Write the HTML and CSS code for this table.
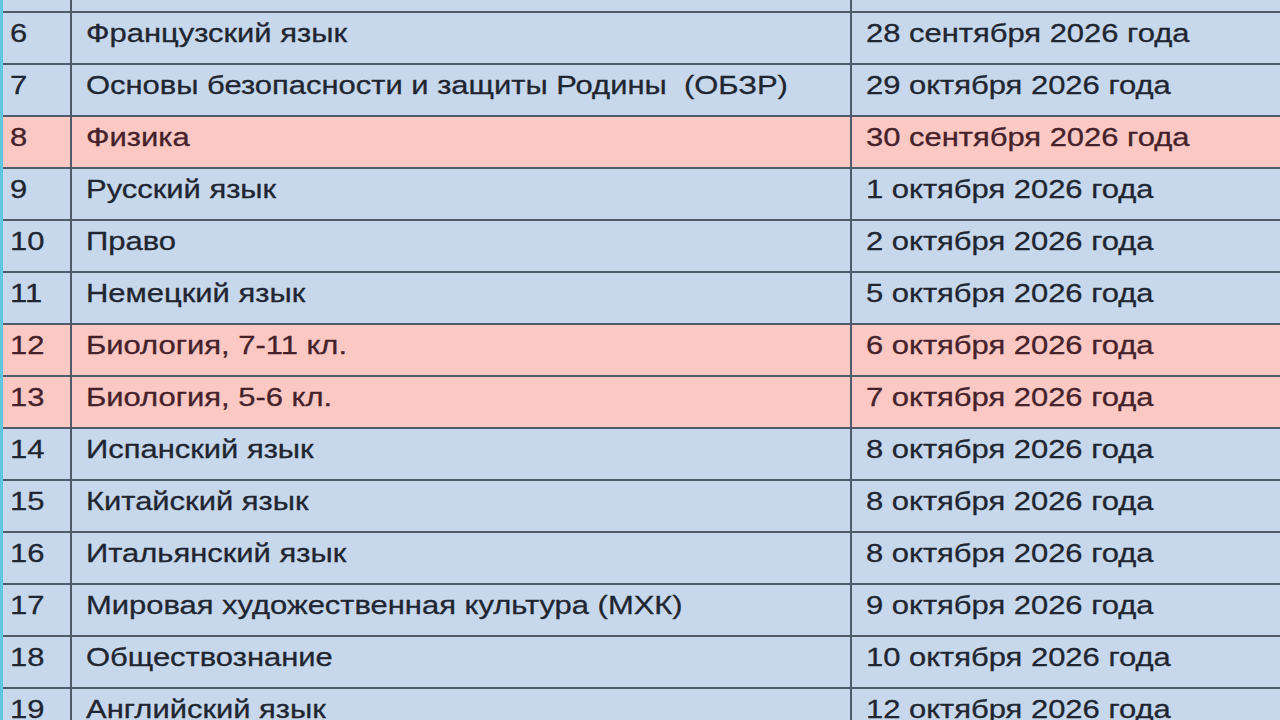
FILE: index.html
```html
<!DOCTYPE html>
<html lang="ru">
<head>
<meta charset="utf-8">
<title>График олимпиад</title>
<link rel="stylesheet" href="styles.css">
</head>
<body>
<div class="sheet">
  <div class="row partial"><div class="c num"></div><div class="c subj"></div><div class="c date"></div></div>
  <div class="row"><div class="c num"><span>6</span></div><div class="c subj"><span>Французский язык</span></div><div class="c date"><span>28 сентября 2026 года</span></div></div>
  <div class="row"><div class="c num"><span>7</span></div><div class="c subj"><span>Основы безопасности и защиты Родины&nbsp; (ОБЗР)</span></div><div class="c date"><span>29 октября 2026 года</span></div></div>
  <div class="row hl"><div class="c num"><span>8</span></div><div class="c subj"><span>Физика</span></div><div class="c date"><span>30 сентября 2026 года</span></div></div>
  <div class="row"><div class="c num"><span>9</span></div><div class="c subj"><span>Русский язык</span></div><div class="c date"><span>1 октября 2026 года</span></div></div>
  <div class="row"><div class="c num"><span>10</span></div><div class="c subj"><span>Право</span></div><div class="c date"><span>2 октября 2026 года</span></div></div>
  <div class="row"><div class="c num"><span>11</span></div><div class="c subj"><span>Немецкий язык</span></div><div class="c date"><span>5 октября 2026 года</span></div></div>
  <div class="row hl"><div class="c num"><span>12</span></div><div class="c subj"><span>Биология, 7-11 кл.</span></div><div class="c date"><span>6 октября 2026 года</span></div></div>
  <div class="row hl"><div class="c num"><span>13</span></div><div class="c subj"><span>Биология, 5-6 кл.</span></div><div class="c date"><span>7 октября 2026 года</span></div></div>
  <div class="row"><div class="c num"><span>14</span></div><div class="c subj"><span>Испанский язык</span></div><div class="c date"><span>8 октября 2026 года</span></div></div>
  <div class="row"><div class="c num"><span>15</span></div><div class="c subj"><span>Китайский язык</span></div><div class="c date"><span>8 октября 2026 года</span></div></div>
  <div class="row"><div class="c num"><span>16</span></div><div class="c subj"><span>Итальянский язык</span></div><div class="c date"><span>8 октября 2026 года</span></div></div>
  <div class="row"><div class="c num"><span>17</span></div><div class="c subj"><span>Мировая художественная культура (МХК)</span></div><div class="c date"><span>9 октября 2026 года</span></div></div>
  <div class="row"><div class="c num"><span>18</span></div><div class="c subj"><span>Обществознание</span></div><div class="c date"><span>10 октября 2026 года</span></div></div>
  <div class="row"><div class="c num"><span>19</span></div><div class="c subj"><span>Английский язык</span></div><div class="c date"><span>12 октября 2026 года</span></div></div>
</div>
</body>
</html>
```

FILE: styles.css
```css
html, body {
  margin: 0;
  padding: 0;
  background: #c7d8ec;
  overflow: hidden;
}
.sheet {
  width: 1280px;
  height: 720px;
  overflow: hidden;
  font-family: "Liberation Sans", Arial, sans-serif;
  font-size: 26px;
  color: #1f2631;
  border-left: 3px solid #5ec6df;
  box-sizing: border-box;
}
.row {
  display: grid;
  grid-template-columns: 69px 780px 1fr;
  height: 52px;
  border-bottom: 2px solid #4f5b68;
  box-sizing: border-box;
  background: #c7d8ec;
}
.row.partial {
  height: 13px;
}
.row.hl {
  background: #fcc8c4;
  color: #45222a;
}
.c {
  padding-top: 5px;
  line-height: 30px;
  white-space: nowrap;
  overflow: hidden;
}
.c span {
  display: inline-block;
  transform: scaleX(1.19);
  transform-origin: left center;
  -webkit-text-stroke: 0.3px currentColor;
}
.num {
  padding-left: 7px;
  border-right: 2px solid #4f5b68;
}
.subj {
  padding-left: 14px;
  border-right: 2px solid #4f5b68;
}
.date {
  padding-left: 14px;
}
```
